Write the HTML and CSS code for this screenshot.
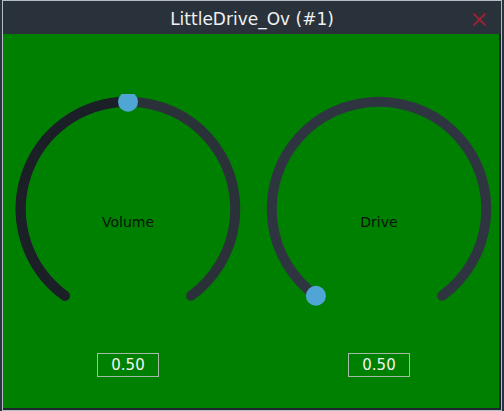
FILE: index.html
```html
<!DOCTYPE html>
<html>
<head>
<meta charset="utf-8">
<link rel="stylesheet" href="styles.css">
</head>
<body>
<div class="window">
  <div class="titlebar">
    <span class="title">LittleDrive_Ov (#1)</span>
    <svg class="close" width="15" height="15" viewBox="0 0 15 15"><path d="M1.5 1.5 L13.5 13.5 M13.5 1.5 L1.5 13.5" stroke="#9a2232" stroke-width="1.8" fill="none"/></svg>
  </div>
  <div class="panel">
    <div class="knob">
      <div class="dial">
        <svg width="230" height="230" viewBox="0 0 230 230">
          <path d="M51.9 201.8 A107.3 107.3 0 1 1 178.1 201.8" fill="none" stroke="#2b3139" stroke-width="10" stroke-linecap="round"/>
          <path d="M51.9 201.8 A107.3 107.3 0 0 1 115 7.7" fill="none" stroke="#1b1f26" stroke-width="10" stroke-linecap="round"/>
          <circle cx="115" cy="7.7" r="10" fill="#4fa6d4"/>
        </svg>
        <span class="label">Volume</span>
      </div>
      <div class="value">0.50</div>
    </div>
    <div class="knob">
      <div class="dial">
        <svg width="230" height="230" viewBox="0 0 230 230">
          <path d="M51.9 201.8 A107.3 107.3 0 1 1 178.1 201.8" fill="none" stroke="#2e3540" stroke-width="10" stroke-linecap="round"/>
          <circle cx="51.9" cy="201.8" r="10" fill="#4fa6d4"/>
        </svg>
        <span class="label">Drive</span>
      </div>
      <div class="value">0.50</div>
    </div>
  </div>
</div>
</body>
</html>
```
FILE: styles.css
```css
html, body {
  margin: 0;
  padding: 0;
}
body {
  background: #2a3441;
  width: 504px;
  height: 411px;
  overflow: hidden;
  font-family: "DejaVu Sans", sans-serif;
}
.window {
  margin-left: 2px;
  width: 498px;
  height: 409px;
  border: 1px solid #b4bcc4;
  background: #1f262d;
  display: flex;
  flex-direction: column;
}
.titlebar {
  height: 33px;
  flex: none;
  background: #29313a;
  display: flex;
  align-items: center;
  justify-content: center;
  position: relative;
}
.title {
  color: #eef1f4;
  font-size: 17px;
  padding-top: 3px;
}
.close {
  position: absolute;
  right: 14px;
  top: 11px;
}
.panel {
  flex: 1;
  background: #008000;
  margin: 0 2px 2px 0;
  display: flex;
  padding: 60px 0 0 10px;
  gap: 21px;
}
.knob {
  width: 230px;
  display: flex;
  flex-direction: column;
  align-items: center;
}
.dial {
  display: grid;
  place-items: center;
}
.dial > svg,
.dial > .label {
  grid-area: 1 / 1;
}
.dial > svg {
  display: block;
}
.label {
  color: #0a140a;
  font-size: 14px;
  margin-top: 26px;
}
.value {
  margin-top: 29px;
  width: 62px;
  height: 24px;
  box-sizing: border-box;
  border: 1px solid #a6baa6;
  color: #f2f4f2;
  font-size: 15px;
  display: flex;
  align-items: center;
  justify-content: center;
}
```
